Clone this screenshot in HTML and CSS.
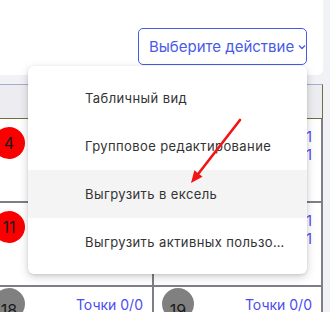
FILE: index.html
```html
<!DOCTYPE html>
<html lang="ru">
<head>
    <meta charset="UTF-8">
    <title>Действия</title>
    <link rel="stylesheet" href="styles.css">
</head>
<body>
    <div class="page">
        <div class="toolbar">
            <div class="actions">
                <button class="action-btn" type="button">
                    <span>Выберите действие</span>
                    <svg class="chevron" width="8" height="6" viewBox="0 0 8 6"><path d="M1 1.5 L4 4.5 L7 1.5" fill="none" stroke="#4a5ae8" stroke-width="1.3"/></svg>
                </button>
                <div class="menu">
                    <div class="menu-item">Табличный вид</div>
                    <div class="menu-item">Групповое редактирование</div>
                    <div class="menu-item active">Выгрузить в ексель</div>
                    <div class="menu-item">Выгрузить активных пользователей</div>
                </div>
            </div>
        </div>

        <div class="table">
            <div class="table-head"></div>
            <div class="grid">
                <div class="cell">
                    <span class="badge red">4</span>
                    <div class="stats"><span>Точки 1/1</span><span>Тесты 1/1</span></div>
                </div>
                <div class="cell">
                    <span class="badge red">5</span>
                    <div class="stats"><span>Точки 1/1</span><span>Тесты 1/1</span></div>
                </div>
                <div class="cell">
                    <span class="badge red">11</span>
                    <div class="stats"><span>Точки 1/1</span><span>Тесты 1/1</span></div>
                </div>
                <div class="cell">
                    <span class="badge red">12</span>
                    <div class="stats"><span>Точки 1/1</span><span>Тесты 1/1</span></div>
                </div>
                <div class="cell">
                    <span class="badge grey">18</span>
                    <div class="stats"><span>Точки 0/0</span></div>
                </div>
                <div class="cell">
                    <span class="badge grey">19</span>
                    <div class="stats"><span>Точки 0/0</span></div>
                </div>
            </div>
        </div>

        <!-- pointer arrow drawn over the menu -->
        <svg class="pointer" width="330" height="312" viewBox="0 0 330 312">
            <line x1="240" y1="120" x2="198.5" y2="173.5" stroke="#f41414" stroke-width="2.6" stroke-linecap="round"/>
            <polygon points="191,183 202.5,176.8 194.4,170.3" fill="#f41414"/>
        </svg>
    </div>
</body>
</html>
```

FILE: styles.css
```css
body {
    margin: 0;
    background-color: #f1f2f5;
    font-family: "Inter", "Noto Sans", sans-serif;
    overflow: hidden;
}
.page {
    position: relative;
    width: 330px;
    height: 312px;
    overflow: hidden;
}
.toolbar {
    width: 323px;
    height: 75px;
    background-color: #fff;
    border-radius: 0 0 6px 0;
    display: flex;
    justify-content: flex-end;
    align-items: flex-start;
    box-sizing: border-box;
    padding: 28px 16px 0 0;
}
.actions {
    position: relative;
}
.action-btn {
    height: 37px;
    width: 169px;
    box-sizing: border-box;
    border: 1px solid #4a5ae8;
    border-radius: 5px;
    background-color: #fff;
    color: #4a5ae8;
    font-family: inherit;
    font-size: 15px;
    white-space: nowrap;
    padding: 0 0 0 10px;
    display: flex;
    align-items: center;
    gap: 4px;
}
.chevron {
    margin-top: 1px;
    flex-shrink: 0;
}
.menu {
    position: absolute;
    right: 0;
    top: 38px;
    width: 279px;
    padding: 8px 0;
    background-color: #fff;
    border-radius: 6px;
    box-shadow: 0 3px 10px rgba(0, 0, 0, 0.18), 0 1px 3px rgba(0, 0, 0, 0.1);
    z-index: 2;
}
.menu-item {
    height: 48px;
    line-height: 48px;
    padding: 0 20px 0 57px;
    font-size: 13px;
    letter-spacing: 0.4px;
    color: #333;
    white-space: nowrap;
    overflow: hidden;
    text-overflow: ellipsis;
}
.menu-item.active {
    background-color: #f4f4f4;
}
.table {
    margin: 9px 0 0 -15px;
    width: 338px;
}
.table-head {
    height: 35px;
    box-sizing: border-box;
    background-color: #ededf1;
    border: 1px solid #6f6e3c;
    border-top-color: #a9abd0;
}
.grid {
    display: grid;
    grid-template-columns: 167px 167px;
    gap: 2px;
    background-color: #7d7e86;
    border-right: 2px solid #7d7e86;
}
.cell {
    height: 82px;
    background-color: #fff;
    display: flex;
    justify-content: space-between;
    align-items: flex-start;
    padding: 8px 9px 0 8px;
    box-sizing: border-box;
}
.badge {
    flex-shrink: 0;
    width: 32px;
    height: 32px;
    border-radius: 50%;
    text-align: center;
    line-height: 32px;
    font-size: 16px;
    color: #1a1a1a;
}
.badge.red {
    background-color: #fb0000;
}
.badge.grey {
    background-color: #808080;
    line-height: 44px;
    margin-top: -7px;
}
.stats {
    display: flex;
    flex-direction: column;
    align-items: flex-end;
    color: #4c4cf0;
    font-size: 14px;
    line-height: 18px;
    margin-top: 1px;
}
.pointer {
    position: absolute;
    left: 0;
    top: 0;
    z-index: 3;
}
```
